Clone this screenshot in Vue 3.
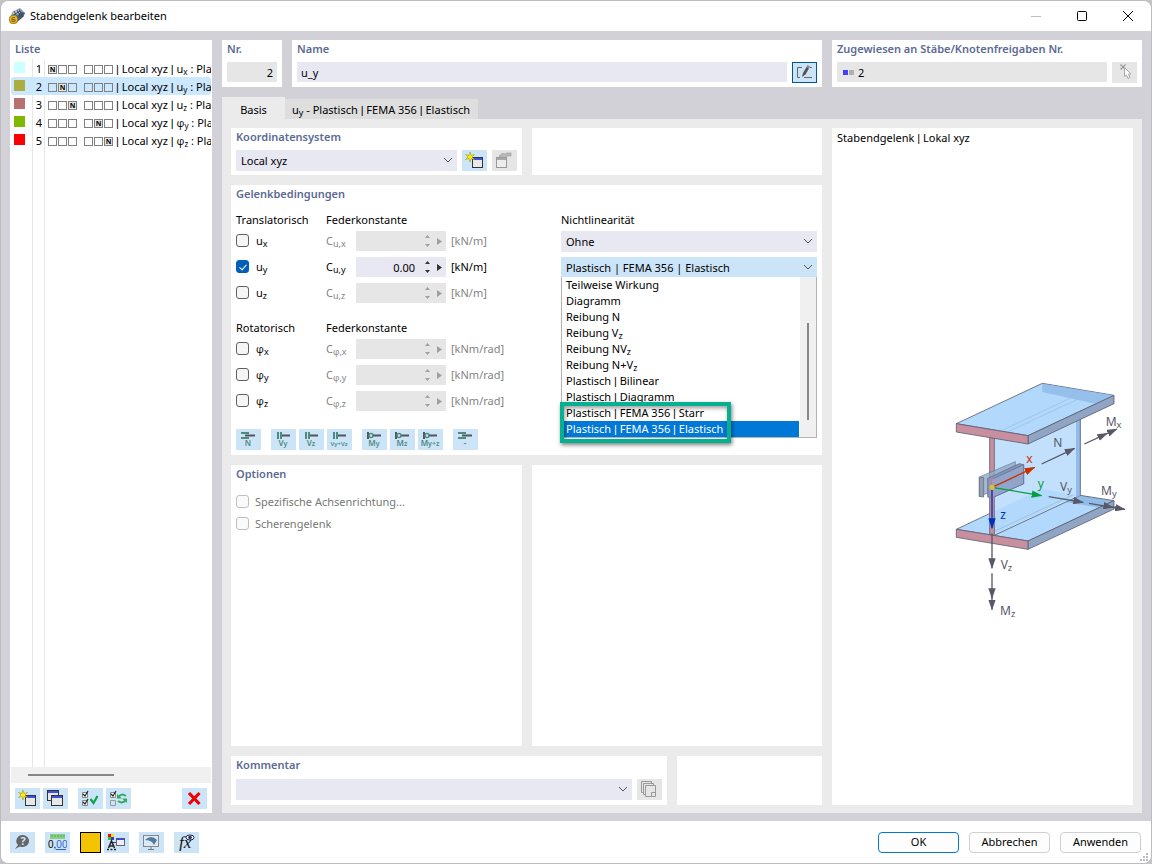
<script setup>
import { h, ref } from 'vue'

const hinges = [
  { nr: 1, color: '#ccffff', on: 0, base: 'u', axis: 'x' },
  { nr: 2, color: '#acac40', on: 1, base: 'u', axis: 'y' },
  { nr: 3, color: '#b87070', on: 2, base: 'u', axis: 'z' },
  { nr: 4, color: '#80b800', on: 4, base: 'φ', axis: 'y' },
  { nr: 5, color: '#ff0000', on: 5, base: 'φ', axis: 'z' },
]
const selected = ref(2)

// Sets the separator bars and the Greek letters of a label in their own face.
const Label = (props) =>
  h('span', props.text.split(/([|φ])/).map((part) => (part === '|' || part === 'φ' ? h('span', { class: part === '|' ? 'bar' : 'phi' }, part) : part)))
Label.props = ['text']

const groups = ref([
  { title: 'Translatorisch', base: 'u', unit: '[kN/m]', rows: [
    { axis: 'x', on: false, value: '' },
    { axis: 'y', on: true, value: '0.00' },
    { axis: 'z', on: false, value: '' },
  ] },
  { title: 'Rotatorisch', base: 'φ', unit: '[kNm/rad]', rows: [
    { axis: 'x', on: false, value: '' },
    { axis: 'y', on: false, value: '' },
    { axis: 'z', on: false, value: '' },
  ] },
])

const options = [
  ['Teilweise Wirkung'],
  ['Diagramm'],
  ['Reibung N'],
  ['Reibung V', 'z'],
  ['Reibung NV', 'z'],
  ['Reibung N+V', 'z'],
  ['Plastisch | Bilinear'],
  ['Plastisch | Diagramm'],
  ['Plastisch | FEMA 356 | Starr'],
  ['Plastisch | FEMA 356 | Elastisch'],
]

const presets = [
  [{ kind: 'slide', t: 'N', s: '' }],
  [{ kind: 'shear', t: 'V', s: 'y' }, { kind: 'shear', t: 'V', s: 'z' }, { kind: 'shear', t: 'V', s: 'y+Vz' }],
  [{ kind: 'pin', t: 'M', s: 'y' }, { kind: 'pin', t: 'M', s: 'z' }, { kind: 'pin', t: 'M', s: 'y+z' }],
  [{ kind: 'slide', t: '-', s: '' }],
]
</script>

<template>
  <div class="window">
    <header class="titlebar">
      <svg class="app-icon" width="16" height="16" viewBox="0 0 16 16">
        <path d="M3 4 11 0 16 5 14 9 8 14 2 9z" fill="#8497ad" />
        <path d="M3 4 11 0 12 4 5 8z" fill="#b9c7d6" />
        <path d="M12 4 16 5 14 9 8 14 7 9z" fill="#465a73" />
        <path d="M5 3 8 9M8 2l4 7M3 8l8-5M10 1l4 8" stroke="#334861" stroke-width="1" fill="none" />
        <rect x="0.5" y="7.5" width="8" height="8" rx="3" fill="#e9b928" stroke="#a37b10" />
        <path d="M6 9.5H4a1 1 0 0 0-1 1v3h3v-2H3" stroke="#7c5c08" fill="none" />
      </svg>
      <h1>Stabendgelenk bearbeiten</h1>
      <div class="sys">
        <button type="button" aria-label="Minimieren" disabled>
          <svg width="10" height="10" viewBox="0 0 10 10"><path d="M0 5.5h10" stroke="#bfbfbf" /></svg>
        </button>
        <button type="button" aria-label="Maximieren">
          <svg width="10" height="10" viewBox="0 0 10 10"><rect x="0.5" y="0.5" width="9" height="9" rx="1" fill="none" stroke="#000" /></svg>
        </button>
        <button type="button" aria-label="Schließen">
          <svg width="10" height="10" viewBox="0 0 10 10"><path d="M0 0 10 10M10 0 0 10" stroke="#000" /></svg>
        </button>
      </div>
    </header>

    <main class="body">
      <aside class="panel list-panel">
        <h2>Liste</h2>
        <ul class="list" role="listbox" aria-label="Liste">
          <li
            v-for="g in hinges" :key="g.nr" role="option"
            :aria-selected="g.nr === selected" :class="{ active: g.nr === selected }"
            @click="selected = g.nr"
          >
            <i class="swatch" :style="{ background: g.color }"></i>
            <span class="nr">{{ g.nr }}</span>
            <span class="boxes">
              <i v-for="n in 6" :key="n" :class="{ on: n - 1 === g.on }">{{ n - 1 === g.on ? 'N' : '' }}</i>
            </span>
            <span class="desc"><Label :text="'| Local xyz | ' + g.base" /><sub>{{ g.axis }}</sub> : Pla</span>
          </li>
        </ul>
        <div class="hscroll"><div></div></div>
        <div class="list-tools">
          <button type="button" class="tool" aria-label="Neu">
            <svg width="19" height="17" viewBox="0 0 19 17">
              <rect x="7.5" y="5.5" width="10" height="10" fill="#e8e8e8" stroke="#333" />
              <path d="M8 7h9" stroke="#3b53e8" stroke-width="2" />
              <path d="M5 0 6 3.5 9.5 2.5 7 5 9.5 7.5 6 6.5 5 10 4 6.5.5 7.5 3 5 .5 2.5 4 3.5z" fill="#ffee00" stroke="#a49a20" stroke-width=".6" />
            </svg>
          </button>
          <button type="button" class="tool" aria-label="Kopieren">
            <svg width="19" height="17" viewBox="0 0 19 17">
              <rect x="1.5" y="0.5" width="11" height="10" fill="#e8e8e8" stroke="#333" />
              <path d="M2 2h10" stroke="#3b53e8" stroke-width="2" />
              <rect x="5.5" y="5.5" width="11" height="10" fill="#e8e8e8" stroke="#333" />
              <path d="M6 7h10" stroke="#3b53e8" stroke-width="2" />
            </svg>
          </button>
          <button type="button" class="tool gap" aria-label="Alle auswählen">
            <svg width="19" height="17" viewBox="0 0 19 17">
              <path d="M1.5 2.5h5v5h-5zM1.5 10.5h5v5h-5z" fill="#fff" stroke="#888" />
              <path d="M2 4l2 2 3-5M2 12l2 2 3-5" stroke="#222" stroke-width="1.2" fill="none" />
              <path d="M9.500 9l3 4 4-7" stroke="#0fa34a" stroke-width="2.200" fill="none" />
            </svg>
          </button>
          <button type="button" class="tool" aria-label="Auswahl umkehren">
            <svg width="19" height="17" viewBox="0 0 19 17">
              <path d="M1.5 2.5h5v5h-5z" fill="#fff" stroke="#888" /><path d="M1.5 10.5h5v5h-5z" fill="none" stroke="#999" />
              <path d="M2 4l2 2 3-5" stroke="#222" stroke-width="1.2" fill="none" />
              <path d="M17 6Q12 3 10 6.500M9 11q5 3 7-.5" fill="none" stroke="#2fa85a" stroke-width="2" />
              <path d="M8 4v4.500h5zM18 13V8.500h-5z" fill="#2fa85a" />
            </svg>
          </button>
          <button type="button" class="tool push" aria-label="Löschen">
            <svg width="19" height="17" viewBox="0 0 19 17"><path d="M4 3 14.500 14M14.500 3 4 14" stroke="#f00000" stroke-width="3.200" /></svg>
          </button>
        </div>
      </aside>

      <section class="work">
        <div class="top">
          <div class="panel">
            <h2><label for="nr">Nr.</label></h2>
            <input id="nr" class="field grey num" value="2" readonly>
          </div>
          <div class="panel">
            <h2><label for="name">Name</label></h2>
            <div class="line">
              <input id="name" class="field" value="u_y">
              <button type="button" class="tool pressed" aria-label="Name bearbeiten">
                <svg width="19" height="17" viewBox="0 0 19 17">
                  <path d="M7 3.5H2.5v10H5M12 3.5h1M15 3.5h2M9 13.5h8" stroke="#666" fill="none" />
                  <path d="M7 13 8 9 11.5 3 14 4.5 10.5 10.5z" fill="#555" />
                  <path d="M11.5 3 12.5 1 15 2.5 14 4.5z" fill="#888" />
                </svg>
              </button>
            </div>
          </div>
          <div class="panel">
            <h2><label for="assigned">Zugewiesen an Stäbe/Knotenfreigaben Nr.</label></h2>
            <div class="line">
              <div class="field grey assigned">
                <svg width="11" height="5" viewBox="0 0 11 5"><path d="M0 0h5v5H0z" fill="#4040ff" /><path d="M6 0h5v5H6z" fill="#b0b0b0" /></svg>
                <input id="assigned" value="2" readonly>
              </div>
              <button type="button" class="tool off" aria-label="Auswählen" disabled>
                <svg width="19" height="17" viewBox="0 0 19 17">
                  <path d="M5.5 .5l5 5M10.5 .5l-5 5" stroke="#999" stroke-width="1.2" />
                  <path d="M9.5 3.5v9l2-1.5 1.5 3.5 2-1-1.5-3.5h2.5z" fill="#fff" stroke="#aaa" />
                </svg>
              </button>
            </div>
          </div>
        </div>

        <nav class="tabs" role="tablist">
          <button type="button" role="tab" aria-selected="true" class="tab current">Basis</button>
          <button type="button" role="tab" aria-selected="false" class="tab">u<sub>y</sub><Label text=" - Plastisch | FEMA 356 | Elastisch" /></button>
        </nav>

        <div class="page">
          <div class="forms">
            <div class="pair coord">
              <div class="panel">
                <h2><label for="cs">Koordinatensystem</label></h2>
                <div class="line">
                  <div class="combo">
                    <select id="cs"><option>Local xyz</option></select>
                    <svg width="10" height="6" viewBox="0 0 10 6"><path d="M1 1l4 4 4-4" stroke="#555" fill="none" /></svg>
                  </div>
                  <button type="button" class="tool" aria-label="Neues Koordinatensystem">
                    <svg width="19" height="17" viewBox="0 0 19 17">
                      <rect x="7.5" y="5.5" width="10" height="10" fill="#e8e8e8" stroke="#333" />
                      <path d="M8 7h9" stroke="#3b53e8" stroke-width="2" />
                      <path d="M5 0 6 3.5 9.5 2.5 7 5 9.5 7.5 6 6.5 5 10 4 6.5.5 7.5 3 5 .5 2.5 4 3.5z" fill="#ffee00" stroke="#a49a20" stroke-width=".6" />
                    </svg>
                  </button>
                  <button type="button" class="tool off" aria-label="Koordinatensystem bearbeiten" disabled>
                    <svg width="19" height="17" viewBox="0 0 19 17">
                      <rect x="1.5" y="5.5" width="10" height="10" fill="#ededed" stroke="#999" />
                      <path d="M2 7h9" stroke="#aaa" stroke-width="2" />
                      <path d="M4 4q3-4 6-2l2-1h4v3h-4l-3 2-2-2-2 1z" fill="#bbb" stroke="#999" stroke-width=".6" />
                    </svg>
                  </button>
                </div>
              </div>
              <div class="panel"></div>
            </div>

            <div class="panel conditions">
              <h2>Gelenkbedingungen</h2>
              <div class="cond-grid">
                <div>
                  <div v-for="g in groups" :key="g.title" class="dof-group">
                    <div class="dof-head"><span>{{ g.title }}</span><span>Federkonstante</span></div>
                    <div v-for="r in g.rows" :key="r.axis" class="dof" :class="{ off: !r.on }">
                      <label class="check"><input v-model="r.on" type="checkbox"><span><Label :text="g.base" /><sub>{{ r.axis }}</sub></span></label>
                      <label class="c" :for="g.base + r.axis">C<sub><Label :text="g.base + ',' + r.axis" /></sub></label>
                      <div class="spin">
                        <input :id="g.base + r.axis" type="text" :value="r.value" :disabled="!r.on">
                        <svg width="18" height="16" viewBox="0 0 18 16">
                          <path d="M0 5 2.5 2 5 5zM0 11 2.5 14 5 11zM12 5v7l5-3.5z" fill="currentColor" />
                        </svg>
                      </div>
                      <span class="unit">{{ g.unit }}</span>
                    </div>
                  </div>
                </div>
                <div>
                  <div class="dof-head"><label for="nl-x">Nichtlinearität</label></div>
                  <div class="combo nl">
                    <select id="nl-x"><option>Ohne</option></select>
                    <svg width="10" height="6" viewBox="0 0 10 6"><path d="M1 1l4 4 4-4" stroke="#555" fill="none" /></svg>
                  </div>
                  <div class="combo open">
                    <select aria-label="Nichtlinearität y"><option>Plastisch | FEMA 356 | Elastisch</option></select>
                    <svg width="10" height="6" viewBox="0 0 10 6"><path d="M1 1l4 4 4-4" stroke="#555" fill="none" /></svg>
                    <div class="drop">
                      <ul role="listbox" aria-label="Nichtlinearität">
                        <li v-for="(o, i) in options" :key="i" role="option" :aria-selected="i === 9" :class="{ hit: i === 9 }"><Label :text="o[0]" /><sub v-if="o[1]">{{ o[1] }}</sub></li>
                      </ul>
                      <div class="vscroll"><div></div></div>
                      <div class="marker"></div>
                    </div>
                  </div>
                </div>
              </div>
              <div class="presets">
                <div v-for="(set, i) in presets" :key="i">
                  <button v-for="p in set" :key="p.t + p.s" type="button" class="tool" :aria-label="p.t + p.s">
                    <svg width="25" height="21" viewBox="0 0 25 21">
                      <g v-if="p.kind === 'slide'">
                        <path d="M5 4h8M5 9h8" stroke="#4d8a80" stroke-width="2" /><path d="M9 6.5h10" stroke="#555" stroke-width="2" />
                      </g>
                      <g v-else-if="p.kind === 'shear'">
                        <path d="M7 3v7M10 3v7" stroke="#4d8a80" stroke-width="2" /><path d="M11 6.5h8" stroke="#555" stroke-width="2" />
                      </g>
                      <g v-else>
                        <path d="M6 3v7M10 6.5h9" stroke="#555" stroke-width="2" /><circle cx="9" cy="6.5" r="2" fill="#cce4f7" stroke="#4d8a80" stroke-width="1.5" />
                      </g>
                      <text x="12" y="17" text-anchor="middle" fill="#4d8a80" font-weight="600" :font-size="p.s.length > 3 ? 6 : 8">{{ p.t }}<tspan v-if="p.s" :font-size="p.s.length > 3 ? 6 : 7">{{ p.s }}</tspan></text>
                    </svg>
                  </button>
                </div>
              </div>
            </div>

            <div class="pair opts">
              <div class="panel">
                <h2>Optionen</h2>
                <div class="opt-list">
                  <label class="check"><input type="checkbox" disabled><span>Spezifische Achsenrichtung...</span></label>
                  <label class="check"><input type="checkbox" disabled><span>Scherengelenk</span></label>
                </div>
              </div>
              <div class="panel"></div>
            </div>

            <div class="pair comment">
              <div class="panel">
                <h2><label for="comment">Kommentar</label></h2>
                <div class="line">
                  <div class="combo">
                    <select id="comment"><option></option></select>
                    <svg width="10" height="6" viewBox="0 0 10 6"><path d="M1 1l4 4 4-4" stroke="#555" fill="none" /></svg>
                  </div>
                  <button type="button" class="tool off" aria-label="Kommentar auswählen" disabled>
                    <svg width="19" height="17" viewBox="0 0 19 17">
                      <path d="M4 11.5H1.5V.5h10V3M6 13.5H3.5v-11h10V5" fill="none" stroke="#999" />
                      <path d="M5.5 4.5h10v11h-10zM11.5 15v-3.5H15" fill="none" stroke="#999" />
                    </svg>
                  </button>
                </div>
              </div>
              <div class="panel"></div>
            </div>
          </div>

          <div class="panel preview">
            <p><Label text="Stabendgelenk | Lokal xyz" /></p>
            <svg class="beam" width="180" height="240" viewBox="30 30 540 720">
              <defs>
                <marker id="arrow" viewBox="0 0 32 22" refX="30" refY="11" markerWidth="32" markerHeight="22" markerUnits="userSpaceOnUse" orient="auto">
                  <path d="M0 0 32 11 0 22z" fill="#585868" />
                </marker>
                <marker id="arrow-x" viewBox="0 0 32 22" refX="30" refY="11" markerWidth="32" markerHeight="22" markerUnits="userSpaceOnUse" orient="auto">
                  <path d="M0 0 32 11 0 22z" fill="#c83200" />
                </marker>
                <marker id="arrow-y" viewBox="0 0 32 22" refX="30" refY="11" markerWidth="32" markerHeight="22" markerUnits="userSpaceOnUse" orient="auto">
                  <path d="M0 0 32 11 0 22z" fill="#00a040" />
                </marker>
                <marker id="arrow-z" viewBox="0 0 32 22" refX="30" refY="11" markerWidth="32" markerHeight="22" markerUnits="userSpaceOnUse" orient="auto">
                  <path d="M0 0 32 11 0 22z" fill="#0030c0" />
                </marker>
              </defs>
              <g stroke="#5a6074" stroke-width="2.5" stroke-linejoin="round">
                <path d="M49 478 307 357 522 392 264 513z" fill="#b2d8fb" stroke="none" />
                <path d="M421 376 522 392 478 413 378 396z" fill="#91bce8" stroke="none" />
                <path d="M49 478 150 430M420 376 522 392 264 513 49 478" fill="none" />
                <path d="M163 200 421 80V376L163 496z" fill="#c2e0fb" stroke="none" />
                <path d="M163 424 307 357 410 376 163 493z" fill="#b2d8fb" stroke="none" />
                <path d="M163 496 421 376" />
                <path d="M163 484 400 374" stroke="#91b7dc" stroke-width="2" />
                <path d="M408 86 421 80V376L408 382z" fill="#91bce8" stroke="none" />
                <path d="M421 80V376" fill="none" />
                <path d="M264 513 522 392V417L264 538z" fill="#90a5c4" />
                <path d="M49 478 264 513V538L49 502z" fill="#c8909f" />
                <path d="M149 202 163 204V496L149 493z" fill="#c8909f" />
                <path d="M49 161 307 40 522 76 264 197z" fill="#b2d8fb" />
                <path d="M307 41 520 76 466 101 307 66z" fill="#91bce8" stroke="none" opacity=".85" />
                <path d="M200 187 421 84M180 184 400 80" stroke="#9bbcdd" stroke-width="2" fill="none" />
                <path d="M264 197 522 76V101L264 222z" fill="#90a5c4" />
                <path d="M49 161 264 197V222L49 186z" fill="#c8909f" />
              </g>
              <g stroke="#66728c" stroke-width="2.5">
                <path d="M118 321 226 275V332L118 380z" fill="#91aaca" opacity=".8" />
                <path d="M118 321 131 323V381L118 379z" fill="#949daf" />
                <path d="M143 325 238 281 251 284V341L155 384 143 381z" fill="#8295b8" />
                <path d="M155 328 251 284V341L155 384z" fill="#91a5cc" />
              </g>
              <path d="M149 325h14v65h-14z" fill="#c8909f" opacity=".5" />
              <g fill="none" stroke="#585868" stroke-width="4" marker-end="url(#arrow)">
                <path d="M156 490V595" /><path d="M156 610V685" /><path d="M156 680V719" />
                <path d="M305 282 404 235" /><path d="M433 222 502 190" /><path d="M498 192 531 177" />
                <path d="M326 380 430 397" /><path d="M447 400 520 412" /><path d="M515 411 555 418" />
              </g>
              <path d="M156 352 284 292" stroke="#c83200" stroke-width="4" marker-end="url(#arrow-x)" />
              <path d="M156 352 305 377" stroke="#00a040" stroke-width="4" marker-end="url(#arrow-y)" />
              <path d="M156 352V475" stroke="#0030c0" stroke-width="4" marker-end="url(#arrow-z)" />
              <circle cx="156" cy="352" r="8" fill="#d8c040" />
              <g fill="#585868" font-size="36">
                <text x="340" y="230">N</text>
                <text x="497" y="167">M<tspan font-size="28" dy="6">x</tspan></text>
                <text x="360" y="364">V<tspan font-size="28" dy="6">y</tspan></text>
                <text x="483" y="375">M<tspan font-size="28" dy="6">y</tspan></text>
                <text x="182" y="598">V<tspan font-size="28" dy="6">z</tspan></text>
                <text x="180" y="734">M<tspan font-size="28" dy="6">z</tspan></text>
                <text x="259" y="278" fill="#c83200">x</text>
                <text x="293" y="354" fill="#00a040">y</text>
                <text x="181" y="446" fill="#0030c0">z</text>
              </g>
            </svg>
          </div>
        </div>
      </section>
    </main>

    <footer class="footer">
      <button type="button" class="tool" aria-label="Hilfe">
        <svg width="19" height="17" viewBox="0 0 19 17">
          <path d="M10 1a6.5 6 0 1 1-3 11.5L2 15l3-4A6.5 6 0 0 1 10 1z" fill="#666" />
          <text x="10" y="11" text-anchor="middle" fill="#cce4f7" font-size="11" font-weight="700">?</text>
        </svg>
      </button>
      <button type="button" class="tool gap" aria-label="Einheiten">
        <svg width="19" height="17" viewBox="0 0 19 17">
          <path d="M2 0h15v5H2z" fill="#8bcf80" /><path d="M4 1v2M7 1v2M10 1v2M13 1v2M16 1v2" stroke="#5aa550" />
          <text x="0" y="14" class="digits" font-size="10">0,<tspan fill="#2e5fd0">00</tspan></text><path d="M8 15.5h10" stroke="#2e5fd0" />
        </svg>
      </button>
      <button type="button" class="color gap" aria-label="Farbe"></button>
      <button type="button" class="tool near" aria-label="Darstellung">
        <svg width="19" height="17" viewBox="0 0 19 17">
          <path d="M1 0h3v3H1z" fill="#f00" /><path d="M4 0h3v3H4z" fill="#fd0" /><path d="M1 3h3v3H1z" fill="#2c2" /><path d="M4 3h3v3H4z" fill="#33f" />
          <path d="M1.5 14 4.5 7 7.5 14M3 12h3M0 15.5h2M3.5 15.5h2M7 15.5h2" stroke="#222" stroke-width="1.5" fill="none" />
          <path d="M6 8.5h3" stroke="#444" /><rect x="9.5" y="4.5" width="8" height="7" fill="#eef" stroke="#666" /><path d="M9 5h9" stroke="#4450b8" stroke-width="2" />
        </svg>
      </button>
      <button type="button" class="tool gap" aria-label="Grafik">
        <svg width="19" height="17" viewBox="0 0 19 17">
          <rect x="1.5" y="1.5" width="15" height="11" fill="#dceaf6" stroke="#888" />
          <path d="M3 6q6-6 12 0l-3 5-2-3Q7 6 3 6z" fill="#527a9f" /><path d="M9 13v3M6 15.5h6" stroke="#777" />
        </svg>
      </button>
      <button type="button" class="tool gap" aria-label="Formel">
        <svg width="19" height="17" viewBox="0 0 19 17">
          <text x="2" y="14" class="fx" font-size="17">fx</text>
          <ellipse cx="13" cy="3.5" rx="4" ry="2.5" fill="#fff" stroke="#224" /><circle cx="13" cy="3.5" r="1.8" fill="#335" />
        </svg>
      </button>
      <div class="actions">
        <button type="button" class="primary">OK</button>
        <button type="button">Abbrechen</button>
        <button type="button">Anwenden</button>
      </div>
      <svg class="grip" width="8" height="8" viewBox="0 0 8 8"><path d="M6 0h2v2H6zM3 3h2v2H3zM6 3h2v2H6zM0 6h2v2H0zM3 6h2v2H3zM6 6h2v2H6z" fill="#bbb" /></svg>
    </footer>
  </div>
</template>

<style>
body {
  background: #c4c4c8;
}
.bar {
  font-family: "Liberation Sans", sans-serif;
}
.phi {
  font-family: "Open Sans", "DejaVu Sans", sans-serif;
}
</style>

<style scoped>
* {
  box-sizing: border-box;
}
.window {
  display: flex;
  flex-direction: column;
  min-height: 100vh;
  border: 1px solid #bcbcc0;
  border-radius: 8px;
  overflow: hidden;
  background: #fff;
  color: #000;
  font: 11px/16px "Noto Sans", "Open Sans", sans-serif;
}
button, input, select {
  font: inherit;
  color: inherit;
  margin: 0;
  padding: 0;
  border: 0;
  border-radius: 0;
  background: none;
}
h1, h2, p, ul {
  margin: 0;
  padding: 0;
  list-style: none;
}
svg {
  display: block;
}
sub {
  font-size: 9px;
  line-height: 0;
  vertical-align: -2px;
}
.titlebar {
  display: flex;
  align-items: center;
  height: 30px;
  padding-left: 8px;
  gap: 5px;
}
h1 {
  font-size: 11px;
  font-weight: 400;
}
.sys {
  display: flex;
  margin-left: auto;
}
.sys button {
  width: 46px;
  height: 30px;
  display: grid;
  place-items: center;
}
.body {
  flex: 1;
  display: flex;
  gap: 10px;
  padding: 9px 9px 8px;
  background: #d2d1d7;
}
.panel {
  background: #fff;
  padding: 0 5px;
  min-width: 0;
}
h2 {
  font-size: 11px;
  line-height: 18px;
  font-weight: 600;
  color: #5c6a94;
  white-space: nowrap;
}
.list-panel {
  flex: none;
  width: 202px;
  display: flex;
  flex-direction: column;
  padding: 0 1px;
}
.list-panel h2 {
  padding-left: 4px;
}
.list {
  flex: 1;
  margin-top: 1px;
  background: linear-gradient(#e6e6e6, #e6e6e6) 21px 0 / 1px 100% no-repeat, linear-gradient(#e6e6e6, #e6e6e6) 33px 0 / 1px 100% no-repeat;
}
.list li {
  display: flex;
  align-items: center;
  height: 18px;
  padding: 2px 0 0 3px;
  overflow: hidden;
  white-space: nowrap;
}
.list li > * {
  flex: none;
}
.list li.active {
  background: #cce8ff;
  border-radius: 3px;
}
.list sub {
  font-size: 8px;
}
.swatch {
  width: 11px;
  height: 11px;
  margin-bottom: 3px;
}
.nr {
  width: 17px;
  text-align: right;
}
.boxes {
  display: flex;
  gap: 1px;
  margin: 0 3px 0 6px;
}
.boxes i {
  width: 9px;
  height: 9px;
  border: 1px solid #808080;
  font: 700 7px/7px "Noto Sans", sans-serif;
  text-align: center;
}
.boxes i.on {
  background: #e8e8e8;
}
.boxes i:nth-child(4) {
  margin-left: 6px;
}
.hscroll {
  height: 16px;
  padding: 7px 0 0 17px;
  background: #f0f0f0;
}
.hscroll div {
  width: 86px;
  height: 2px;
  background: #868686;
}
.list-tools {
  display: flex;
  gap: 3px;
  padding: 5px 4px 4px;
}
.tool {
  flex: none;
  width: 25px;
  height: 21px;
  display: grid;
  place-items: center;
  background: #cce4f7;
}
.tool.off {
  background: #e6e6e6;
}
.tool.pressed {
  border: 1px solid #005499;
}
.list-tools .gap {
  margin-left: 7px;
}
.list-tools .push {
  margin-left: auto;
}
.work {
  flex: 1;
  min-width: 0;
  display: flex;
  flex-direction: column;
}
.top {
  display: grid;
  grid-template-columns: 60px 1fr 310px;
  gap: 10px;
}
.top .panel {
  padding-bottom: 4px;
}
.top h2 {
  margin-bottom: 4px;
}
.line {
  display: flex;
  gap: 5px;
}
.field {
  flex: 1;
  width: 100%;
  min-width: 0;
  height: 20px;
  padding: 1px 4px 0;
  background: #e8e8f2;
}
.grey {
  background: #e6e6e6;
}
.num {
  text-align: right;
}
.assigned {
  display: flex;
  align-items: center;
  gap: 4px;
  padding: 1px 6px 0;
}
.assigned input {
  flex: 1;
  min-width: 0;
}
.tabs {
  display: flex;
  align-items: flex-end;
  margin-top: 10px;
  height: 22px;
}
.tab {
  height: 20px;
  padding: 2px 8px 0 7px;
  background: #dedede;
  white-space: pre;
}
.tab.current {
  height: 22px;
  width: 63px;
  padding: 3px 0 0;
  background: #ebebeb;
}
.page {
  flex: 1;
  display: grid;
  grid-template-columns: 1fr 301px;
  gap: 10px;
  padding: 9px 9px 8px;
  background: #ebebeb;
}
.forms {
  display: flex;
  flex-direction: column;
  gap: 10px;
  min-width: 0;
}
.pair {
  display: grid;
  grid-template-columns: 1fr 1fr;
  gap: 10px;
}
.coord .panel:first-child {
  padding-bottom: 4px;
}
.coord h2 {
  margin-bottom: 4px;
}
.combo {
  position: relative;
  flex: 1;
  min-width: 0;
  height: 21px;
  background: #e8e8f2;
}
.combo select {
  width: 100%;
  height: 100%;
  padding: 1px 22px 0 5px;
  appearance: none;
}
.combo > svg {
  position: absolute;
  right: 4px;
  top: 7px;
  pointer-events: none;
}
.cond-grid {
  display: grid;
  grid-template-columns: 325px 1fr;
  padding-top: 8px;
}
.dof-head {
  display: flex;
  height: 20px;
  line-height: 18px;
}
.dof-head span:first-child {
  width: 90px;
}
.dof-group {
  margin-bottom: 16px;
}
.dof {
  display: flex;
  align-items: center;
  height: 20px;
  margin-bottom: 6px;
}
.check {
  width: 90px;
  display: flex;
  align-items: center;
  gap: 7px;
}
.check input {
  appearance: none;
  position: relative;
  width: 13px;
  height: 13px;
  margin-bottom: 2px;
  border: 1px solid #606060;
  border-radius: 3px;
  background: #f5f5f5;
}
.check input:checked {
  border-color: #005fb8;
  background: #005fb8;
}
.check input:checked::after {
  content: "";
  position: absolute;
  left: 4px;
  top: 2px;
  width: 3px;
  height: 6px;
  border: solid #fff;
  border-width: 0 1px 1px 0;
  transform: rotate(42deg);
}
.c {
  width: 30px;
}
.spin {
  display: flex;
  align-items: center;
  width: 90px;
  height: 20px;
  padding-right: 3px;
  background: #e8e8f2;
  color: #333;
}
.spin input {
  flex: 1;
  min-width: 0;
  padding: 1px 10px 0 4px;
  text-align: right;
  color: #000;
}
.unit {
  padding-left: 5px;
}
.dof.off .c, .dof.off .unit {
  color: #838383;
}
.dof.off .spin {
  background: #e6e6e6;
  color: #a0a0a0;
}
.nl {
  margin-bottom: 5px;
}
.combo.open {
  height: 20px;
  background: #cce4f7;
}
.drop {
  position: absolute;
  top: 20px;
  left: 0;
  right: 0;
  display: flex;
  border: 1px solid #b4b4b4;
  border-top: 0;
  background: #fff;
}
.drop ul {
  flex: 1;
}
.drop li {
  height: 16px;
  padding-left: 4px;
}
.drop li.hit {
  background: #0078d7;
  color: #fff;
}
.vscroll {
  width: 17px;
  padding: 46px 7px 0;
  background: #f0f0f0;
  border-left: 1px solid #fff;
}
.vscroll div {
  height: 97px;
  background: #868686;
}
.marker {
  position: absolute;
  left: -2px;
  top: 125px;
  width: 171px;
  height: 41px;
  border: 4px solid #04b090;
  box-shadow: 1px 2px 4px rgba(0, 0, 0, .5), inset 1px 2px 4px rgba(0, 0, 0, .4);
}
.presets {
  display: flex;
  gap: 10px;
  padding: 2px 0 5px;
}
.presets > div {
  display: flex;
  gap: 3px;
}
.opts {
  flex: 1;
}
.opt-list {
  display: grid;
  gap: 6px;
  margin-top: 11px;
  color: #777;
}
.opt-list .check {
  width: auto;
  gap: 6px;
}
.opt-list input {
  border-color: #c0c0c0;
  background: #fafafa;
}
.comment {
  grid-template-columns: 436fr 145fr;
}
.comment .panel:first-child {
  padding-bottom: 5px;
}
.comment h2 {
  margin-bottom: 5px;
}
.preview {
  display: flex;
  flex-direction: column;
  padding: 1px 3px 0 5px;
}
.preview p {
  line-height: 18px;
}
.beam {
  margin: auto 0;
  align-self: flex-end;
  position: relative;
  top: 24px;
}
.footer {
  position: relative;
  display: flex;
  align-items: center;
  height: 42px;
  padding: 0 10px 0 9px;
}
.footer .gap {
  margin-left: 10px;
}
.footer .near {
  margin-left: 3px;
}
.color {
  width: 21px;
  height: 21px;
  border: 1px solid #000;
  background: #f5c400;
}
.fx {
  font-family: "Liberation Serif", serif;
  font-style: italic;
  fill: #111;
}
.digits {
  font-family: "Liberation Sans", sans-serif;
}
.actions {
  display: flex;
  gap: 10px;
  margin-left: auto;
}
.actions button {
  width: 81px;
  height: 21px;
  border: 1px solid #d0d0d0;
  border-radius: 4px;
  background: #fdfdfd;
}
.actions .primary {
  border-color: #0078d4;
}
.grip {
  position: absolute;
  right: 3px;
  bottom: 2px;
}
</style>
